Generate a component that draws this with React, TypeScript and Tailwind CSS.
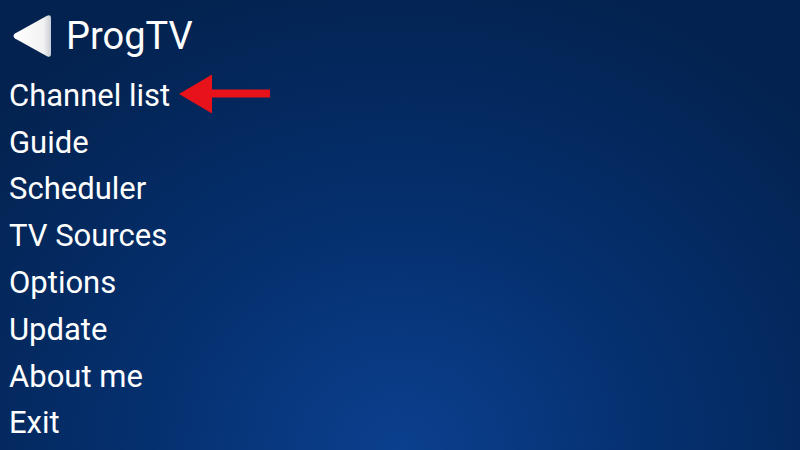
const items = [
  'Channel list',
  'Guide',
  'Scheduler',
  'TV Sources',
  'Options',
  'Update',
  'About me',
  'Exit',
]

export default function App() {
  return (
    <div className="relative w-[800px] h-[450px] overflow-hidden bg-[radial-gradient(ellipse_70%_110%_at_50%_100%,#0b408f_0%,#05306f_45%,#03224f_100%)] font-['Roboto',sans-serif] text-white">
      {/* Header */}
      <div className="flex items-center h-[72px] pl-[12px]">
        <svg width="42" height="44" viewBox="0 0 42 44" className="shrink-0">
          <defs>
            <linearGradient id="tri" x1="0" x2="1" y1="0" y2="0">
              <stop offset="0" stopColor="#ffffff" />
              <stop offset="0.8" stopColor="#f2f2f2" />
              <stop offset="1" stopColor="#c8ccd4" />
            </linearGradient>
          </defs>
          <path
            d="M3 19.5 L35 1.8 Q39 0 39 4.5 L39 39.5 Q39 44 35 42.2 L3 24.5 Q0 22 3 19.5 Z"
            fill="url(#tri)"
          />
        </svg>
        <span className="ml-[12px] text-[38px] leading-none">ProgTV</span>
      </div>

      {/* Menu */}
      <ul className="flex flex-col pl-[9px]">
        {items.map((item) => (
          <li key={item} className="flex items-center h-[46.8px] text-[31px] leading-none">
            {item}
            {item === 'Channel list' && (
              <svg width="92" height="40" viewBox="0 0 92 40" className="ml-[9px] -mt-[2px]">
                <path d="M0 20 L33 0.5 L33 15.5 L91 15.5 L91 23.5 L33 23.5 L33 39.5 Z" fill="#e8121a" />
              </svg>
            )}
          </li>
        ))}
      </ul>
    </div>
  )
}
